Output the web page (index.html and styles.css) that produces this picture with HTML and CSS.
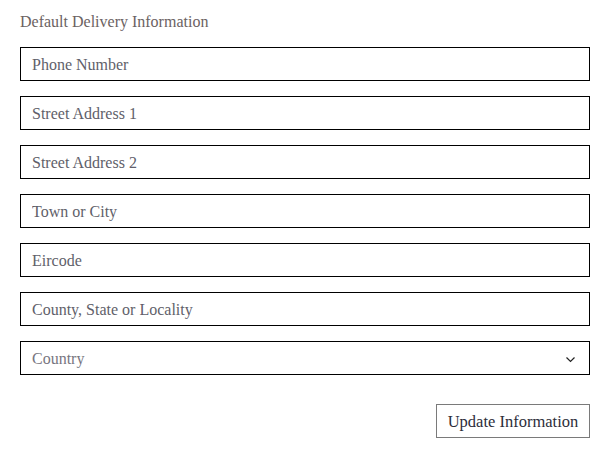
FILE: index.html
```html
<!DOCTYPE html>
<html>
<head>
<meta charset="utf-8">
<link rel="stylesheet" href="styles.css">
</head>
<body>
<form class="form">
  <h2 class="title">Default Delivery Information</h2>
  <div class="fields">
    <input class="field" type="text" placeholder="Phone Number">
    <input class="field" type="text" placeholder="Street Address 1">
    <input class="field" type="text" placeholder="Street Address 2">
    <input class="field" type="text" placeholder="Town or City">
    <input class="field" type="text" placeholder="Eircode">
    <input class="field" type="text" placeholder="County, State or Locality">
    <div class="field select">
      <span class="select-label">Country</span>
      <svg class="chevron" width="11" height="7" viewBox="0 0 11 7"><path d="M1.5 1.5 L5.5 5.5 L9.5 1.5" fill="none" stroke="#222" stroke-width="1.2"/></svg>
    </div>
  </div>
  <div class="actions">
    <button class="btn" type="button">Update Information</button>
  </div>
</form>
</body>
</html>
```
FILE: styles.css
```css
* { box-sizing: border-box; }
body {
  margin: 0;
  background: #fff;
  font-family: "Liberation Serif", "DejaVu Serif", serif;
}
.form {
  padding: 12px 10px 0 20px;
}
.title {
  margin: 0 0 15px 0;
  font-weight: normal;
  font-size: 16px;
  line-height: 20px;
  color: #6b6262;
}
.fields {
  display: flex;
  flex-direction: column;
  gap: 15px;
}
.field {
  display: block;
  width: 570px;
  height: 34px;
  border: 1px solid #000;
  border-radius: 0;
  padding: 2px 11px 0;
  font-family: inherit;
  font-size: 16px;
  color: #333;
  background: #fff;
  outline: none;
}
.field::placeholder { color: #5f5f6a; opacity: 1; }
.select {
  display: flex;
  align-items: center;
  justify-content: space-between;
  padding-right: 13px;
}
.select-label { color: #777580; }
.actions {
  display: flex;
  justify-content: flex-end;
  width: 570px;
  margin-top: 29px;
}
.btn {
  width: 154px;
  height: 34px;
  border: 1px solid #7a7a7a;
  background: #fff;
  font-family: inherit;
  font-size: 16.5px;
  color: #2d2d3a;
  padding: 2px 0 0;
}
```
